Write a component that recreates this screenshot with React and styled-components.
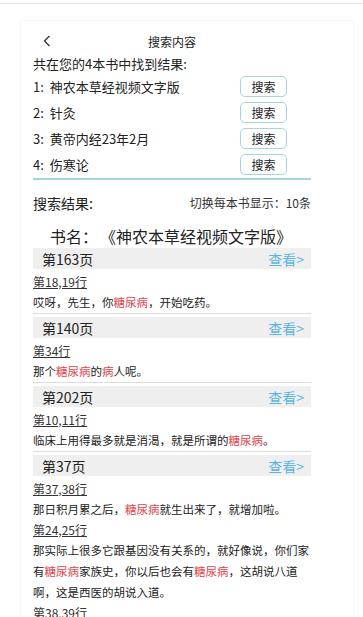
import React from 'react';
import styled, { createGlobalStyle } from 'styled-components';

const GlobalStyle = createGlobalStyle`
  body {
    margin: 0;
    background: #fff;
    font-family: "Noto Sans CJK SC", "Noto Sans", sans-serif;
    color: #222;
  }
`;

const TopLine = styled.div`
  margin-top: 3px;
  height: 1px;
  background: #e2e2e2;
`;

const Panel = styled.div`
  margin: 16px 0 0 20px;
  width: 334px;
  height: 597px;
  box-sizing: border-box;
  border: 1px solid #f8f8f8;
  border-bottom: none;
  padding-left: 12px;
  overflow: hidden;
`;

const Column = styled.div`
  width: 278px;
`;

const Header = styled.div`
  display: grid;
  grid-template-columns: 1fr auto 1fr;
  align-items: center;
  height: 22px;
  margin-top: 9px;
`;

const Back = styled.div`
  padding-left: 10px;
  display: flex;
  align-items: center;
`;

const Title = styled.div`
  font-size: 12px;
  color: #222;
`;

const Intro = styled.div`
  margin-top: 3px;
  font-size: 13px;
  line-height: 18px;
`;

const BookRow = styled.div`
  display: flex;
  align-items: center;
  height: 26px;
  font-size: 13px;
`;

const BookName = styled.div`
  flex: 1;
`;

const SearchButton = styled.button`
  width: 47px;
  height: 21px;
  margin-right: 24px;
  padding: 0;
  border: 1px solid #a9d3de;
  border-radius: 5px;
  background: #fff;
  font-family: inherit;
  font-size: 12px;
  color: #222;
`;

const Divider = styled.div`
  margin-top: 1px;
  height: 2px;
  background: #a6d4e0;
`;

const ResultBar = styled.div`
  display: flex;
  justify-content: space-between;
  align-items: center;
  margin-top: 13px;
  line-height: 20px;
`;

const ResultLabel = styled.div`
  font-size: 14px;
`;

const PerBook = styled.div`
  font-size: 12px;
  color: #333;
`;

const BookTitle = styled.div`
  display: flex;
  gap: 2px;
  margin-top: 11px;
  line-height: 24px;
  font-size: 16px;
  padding-left: 17px;
`;

const Section = styled.div`
  border-top: ${p => (p.$first ? 'none' : '1px solid #dcdcdc')};
  padding-top: ${p => (p.$first ? 0 : 3)}px;
`;

const PageBar = styled.div`
  display: flex;
  justify-content: space-between;
  align-items: center;
  height: 21px;
  background: #efefef;
  padding: 0 7px 0 9px;
`;

const PageNo = styled.div`
  font-size: 14px;
`;

const ViewLink = styled.div`
  font-size: 14px;
  color: #5ab4e3;
`;

const LineLabel = styled.div`
  margin-top: ${p => (p.$afterBar ? 4 : 1)}px;
  font-size: 12px;
  line-height: 18px;
  text-decoration: underline;
  color: #333;
`;

const Snippet = styled.div`
  margin-top: 1px;
  font-size: 11.5px;
  line-height: 21px;
  color: #222;
`;

const Hit = styled.span`
  color: #e4434a;
`;

const books = ['神农本草经视频文字版', '针灸', '黄帝内经23年2月', '伤寒论'];

const renderText = parts =>
  parts.map((p, i) => (typeof p === 'string' ? p : <Hit key={i}>{p.h}</Hit>));

const pages = [
  {
    page: '第163页',
    hits: [{ line: '第18,19行', text: ['哎呀，先生，你', { h: '糖尿病' }, '，开始吃药。'] }],
  },
  {
    page: '第140页',
    hits: [{ line: '第34行', text: ['那个', { h: '糖尿病' }, '的', { h: '病' }, '人呢。'] }],
  },
  {
    page: '第202页',
    hits: [{ line: '第10,11行', text: ['临床上用得最多就是消渴，就是所谓的', { h: '糖尿病' }, '。'] }],
  },
  {
    page: '第37页',
    hits: [
      { line: '第37,38行', text: ['那日积月累之后，', { h: '糖尿病' }, '就生出来了，就增加啦。'] },
      {
        line: '第24,25行',
        text: [
          '那实际上很多它跟基因没有关系的，就好像说，你们家有',
          { h: '糖尿病' },
          '家族史，你以后也会有',
          { h: '糖尿病' },
          '，这胡说八道啊，这是西医的胡说入道。',
        ],
      },
      { line: '第38,39行', text: [] },
    ],
  },
];

export default function App() {
  return (
    <>
      <GlobalStyle />
      <TopLine />
      <Panel>
        <Column>
          <Header>
            <Back>
              <svg width="8" height="12" viewBox="0 0 8 12">
                <polyline points="6.5,1 1.5,6 6.5,11" fill="none" stroke="#333" strokeWidth="1.3" />
              </svg>
            </Back>
            <Title>搜索内容</Title>
            <div />
          </Header>
          <Intro>共在您的4本书中找到结果:</Intro>
          {books.map((b, i) => (
            <BookRow key={b}>
              <BookName>{i + 1}:&nbsp;&nbsp;{b}</BookName>
              <SearchButton>搜索</SearchButton>
            </BookRow>
          ))}
          <Divider />
          <ResultBar>
            <ResultLabel>搜索结果:</ResultLabel>
            <PerBook>切换每本书显示：10条</PerBook>
          </ResultBar>
          <BookTitle>
            <span>书名：</span>
            <span>《神农本草经视频文字版》</span>
          </BookTitle>
          {pages.map((pg, i) => (
            <Section key={pg.page} $first={i === 0}>
              <PageBar>
                <PageNo>{pg.page}</PageNo>
                <ViewLink>查看&gt;</ViewLink>
              </PageBar>
              {pg.hits.map((h, j) => (
                <React.Fragment key={h.line}>
                  <LineLabel $afterBar={j === 0}>{h.line}</LineLabel>
                  {h.text.length > 0 && <Snippet>{renderText(h.text)}</Snippet>}
                </React.Fragment>
              ))}
            </Section>
          ))}
        </Column>
      </Panel>
    </>
  );
}
